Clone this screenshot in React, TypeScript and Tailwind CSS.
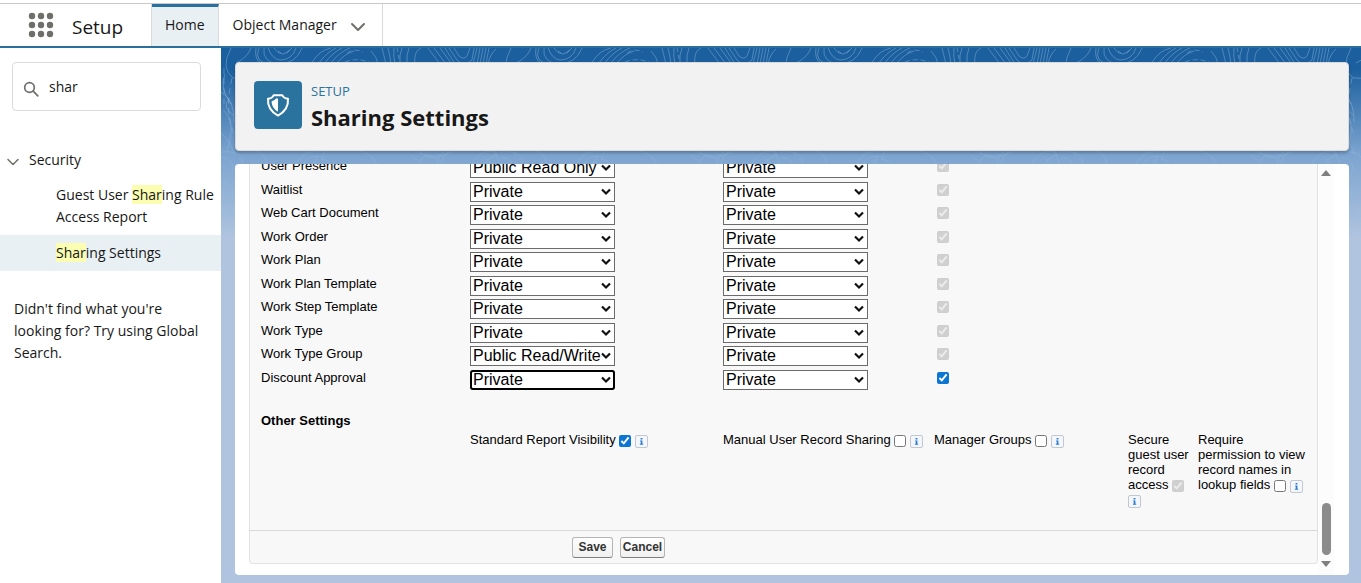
import React from "react";

const rows = [
  { name: "User Presence", internal: "Public Read Only" },
  { name: "Waitlist", internal: "Private" },
  { name: "Web Cart Document", internal: "Private" },
  { name: "Work Order", internal: "Private" },
  { name: "Work Plan", internal: "Private" },
  { name: "Work Plan Template", internal: "Private" },
  { name: "Work Step Template", internal: "Private" },
  { name: "Work Type", internal: "Private" },
  { name: "Work Type Group", internal: "Public Read/Write" },
  { name: "Discount Approval", internal: "Private", custom: true },
];

const accessLevels = ["Private", "Public Read Only", "Public Read/Write"];

function AccessSelect({ label, value, focused = false }: { label: string; value: string; focused?: boolean }) {
  return (
    <div className="relative w-[145px]">
      <select
        aria-label={label}
        defaultValue={value}
        className={
          "block h-5 w-full appearance-none border border-[#6b6b6b] bg-white pl-[2px] text-base leading-none text-black " +
          (focused ? "rounded-[3px] outline-2 -outline-offset-2 outline-black" : "")
        }
      >
        {accessLevels.map((level) => (
          <option key={level}>{level}</option>
        ))}
      </select>
      <svg
        aria-hidden="true"
        viewBox="0 0 10 8"
        className="pointer-events-none absolute top-[6px] right-1 h-2 w-[10px]"
        fill="none"
        stroke="#111"
        strokeWidth="2.2"
      >
        <path d="M1 1.500l4 4 4-4" />
      </svg>
    </div>
  );
}

function InfoButton({ label }: { label: string }) {
  return (
    <button
      type="button"
      aria-label={label}
      className="mt-[2px] inline-flex h-[13px] w-[13px] items-center justify-center rounded-[2px] border border-[#c3c8d0] bg-[#f3f6fb] align-middle"
    >
      <svg viewBox="0 0 9 9" className="h-[9px] w-[9px]" fill="#2a7bd0">
        <rect x="3.6" y="1" width="1.8" height="1.5" />
        <path d="M3 3.4h2.4v3.4h.8v1H2.9v-1h.8V4.3H3z" />
      </svg>
    </button>
  );
}

function Setting({
  id,
  text,
  checked = false,
  disabled = false,
}: {
  id: string;
  text: string;
  checked?: boolean;
  disabled?: boolean;
}) {
  return (
    <>
      <label htmlFor={id}>{text}</label>{" "}
      <input
        id={id}
        type="checkbox"
        defaultChecked={checked}
        disabled={disabled}
        className="h-3 w-3 align-middle accent-[#0b75d2]"
      />{" "}
      <InfoButton label={"About " + text} />
    </>
  );
}

function Topography() {
  return (
    <svg aria-hidden="true" className="absolute inset-x-0 top-0 h-[190px] w-full">
      <defs>
        <linearGradient id="fade" x1="0" y1="0" x2="0" y2="1">
          <stop offset="0" stopColor="#fff" />
          <stop offset="0.7" stopColor="#fff" />
          <stop offset="1" stopColor="#000" />
        </linearGradient>
        <mask id="fadeMask">
          <rect width="100%" height="100%" fill="url(#fade)" />
        </mask>
        <pattern id="contours" width="280" height="190" patternUnits="userSpaceOnUse">
          <g fill="none" stroke="#8fb8de" strokeOpacity="0.45">
            <path d="M43 0q-2 14 14 16q18 0 24-16M47 0q4 11 12 12q12 0 16-12M53 0q8 12 18 0M35 0q-2 12 6 16M30 0q-4 10-15 15M38 0q-6 14 12 17" />
            <path d="M57 3l3 2M65 5l4-3" />
            <path d="M90 16q8-14 20-16M97 16q9-12 18-16M103 16q9-12 18-16M109 16q9-12 20-16M115 16q8-10 18-13" />
            <path d="M126 5q8-5 16-1M124 14q12-5 26 1" strokeDasharray="5 3" />
            <path d="M150 3q6 6 7 13M161 0q2 8 4 16M167 0q2 8 3 16M173 0q-1 8 1 16M181 0q-3 7-2 16M188 0q-3 7-2 16" />
            <path d="M176 0l3 16" strokeDasharray="4 3" />
            <path d="M194 16q-2-12 6-16M207 0l12 16M213 0l12 16M219 0l11 15M224 0l10 16M228 0l8 12q7 7 15 0l2-12M233 0l5 8q5 4 8 0l3-8" />
            <path d="M256 0l-4 16M259 0l-3 16M262 0l-3 16M265 0l-3 16M268 0l-3 16M275 1q-6 5-8 15" />
            <path d="M10 0q-11 20 2 30q14 2 30-8M4 26q-6 14 6 30M0 44q14 8 13 30M2 62q14 12 4 40M0 85q9 8 14 22M8 50q-7 10 4 17" />
            <path d="M3 20v40M11 30q-8 36 3 58" strokeDasharray="6 4" />
            <path d="M0 104q24-2 21 13M0 110q12-2 12 13M4 138q6-15 13-18M32 102q12 2 14 14M74 118q8-18 30-15l-4 8q9 1 9 7M82 118q3-11 16-10q-5 4-2 10M90 118l4-6" />
            <path d="M134 102q16 2 22 14M190 107l10 8M196 103q14 10 36 1M199 112l6-4 12 3M224 103q-7 4-8 14M229 103q-8 4-9 14M250 118q6-16 24-15M264 118q2-9 12-11" />
            <path d="M0 132q14 4 11 26M2 150q8 16 14-12M3 128q4 30 11 42M0 168q16-4 22 8" />
            <path d="M265 34q10 0 15-8M265 54q14-20 15 4q-4 10-15 4M264 68q12 14 16 4M265 94q12 8 15 30M264 110q12 9 16 36M263 124q12 10 16 30M262 142q12 8 17 26" />
          </g>
        </pattern>
      </defs>
      <rect width="100%" height="100%" fill="url(#contours)" mask="url(#fadeMask)" />
    </svg>
  );
}

export default function App() {
  return (
    <div className="flex h-screen flex-col bg-white font-['Open_Sans','Noto_Sans',sans-serif] text-sm text-[#181818]">
      <header className="mt-[3px] flex h-[45px] shrink-0 border-t border-b-2 border-t-[#c9c9c9] border-b-[#2a6f9e]">
        <div className="flex w-[151px] items-center">
          <button type="button" aria-label="App Launcher" className="ml-7">
            <svg viewBox="0 0 26 26" className="h-[26px] w-[26px]" fill="#706e6b">
              {[4, 13, 22].map((y) => [4, 13, 22].map((x) => <circle key={x + "-" + y} cx={x} cy={y} r="3.2" />))}
            </svg>
          </button>
          <span className="ml-[18px] pt-[6px] text-[19px]">Setup</span>
        </div>
        <nav className="flex border-l border-[#dddbda]">
          <a href="#home" className="flex items-center border-t-3 border-r border-t-[#2a6f9e] border-r-[#dddbda] bg-[#e8f0f4] px-[13px] pb-[3px]">
            Home
          </a>
          <div className="flex items-center border-r border-[#dddbda] pr-4 pl-[14px]">
            <a href="#objects">Object Manager</a>
            <button type="button" aria-label="Object Manager menu" className="ml-[13px]">
              <svg viewBox="0 0 16 16" className="mt-1 h-4 w-4" fill="none" stroke="#706e6b" strokeWidth="2" strokeLinecap="round" strokeLinejoin="round">
                <path d="M2 5l6 6 6-6" />
              </svg>
            </button>
          </div>
        </nav>
      </header>

      <div className="flex min-h-0 grow">
        <aside className="w-[221px] shrink-0 pt-[14px]">
          <div className="mx-3 mr-5 flex h-[49px] items-center rounded border border-[#dddbda] pl-[10px]">
            <svg viewBox="0 0 16 16" className="mt-1 h-4 w-4 shrink-0" fill="none" stroke="#706e6b" strokeWidth="1.7" strokeLinecap="round">
              <circle cx="6.5" cy="6.5" r="4.8" />
              <path d="M10.2 10.2l4.6 4.6" />
            </svg>
            <input aria-label="Quick Find" defaultValue="shar" className="ml-[10px] w-0 grow outline-none" />
          </div>
          <button type="button" className="mt-[38px] flex h-[22px] items-center pl-[6px]">
            <svg viewBox="0 0 14 14" className="mt-[3px] h-[14px] w-[14px]" fill="none" stroke="#706e6b" strokeWidth="1.5" strokeLinecap="round" strokeLinejoin="round">
              <path d="M2 4.5l5 5 5-5" />
            </svg>
            <span className="ml-[9px]">Security</span>
          </button>
          <nav className="mt-[6px]">
            <a href="#guest" className="block py-[7px] pl-14 leading-[22px]">
              Guest User <mark className="bg-[#fbfdb0] text-inherit">Shar</mark>ing Rule
              <br />
              Access Report
            </a>
            <a href="#sharing" className="block bg-[#e8f0f4] py-[7px] pl-14 leading-[22px]">
              <mark className="bg-[#fbfdb0] text-inherit">Shar</mark>ing Settings
            </a>
          </nav>
          <p className="mt-[27px] pr-4 pl-[14px] leading-[22px]">
            Didn't find what you're looking for? Try using Global Search.
          </p>
        </aside>

        <main className="relative flex min-w-0 grow flex-col bg-[#b0c4df] bg-[linear-gradient(to_bottom,#1b5f9e_0px,#1b5f9e_20px,#7ba3cf_105px,#b0c4df_190px)] pt-[14px] pr-3 pb-2 pl-[14px]">
          <Topography />
          <section className="relative flex h-[89px] shrink-0 items-center rounded border border-[#dddbda] bg-[#f3f2f2] pl-[18px] shadow-[0_2px_3px_rgba(0,0,0,0.25)]">
            <span className="mb-1 flex h-12 w-12 items-center justify-center rounded bg-[#2a739e]">
              <svg viewBox="0 0 24 24" className="h-6 w-6" fill="none" stroke="#fff" strokeWidth="2" strokeLinejoin="round">
                <path d="M7.6 2.2h8.8q1 3 5.6 3.6q.8 11-10 16.8Q1.200 16.800 2 5.800 6.600 5.200 7.600 2.200z" />
                <path d="M12 5.500v13.300Q5.300 14.500 5.600 8.200 8.700 7.700 10 5.500z" fill="#fff" stroke="none" />
              </svg>
            </span>
            <div className="ml-[9px]">
              <div className="text-[13px] leading-5 text-[#2a739e]">SETUP</div>
              <h1 className="text-[22px] leading-8 font-bold">Sharing Settings</h1>
            </div>
          </section>

          <section className="relative mt-[13px] flex min-h-0 grow rounded bg-white pr-[15px] pl-[14px] font-['Liberation_Sans',Arial,sans-serif] text-[13px] leading-[15px] text-black">
            <form className="flex min-w-0 grow flex-col justify-end overflow-hidden pb-[11px]">
              <div className="border-x border-[#e2e2e2] bg-[#f8f8f8] pl-[11px]">
                <table className="w-full table-fixed border-collapse">
                  <colgroup>
                    <col className="w-[209px]" />
                    <col className="w-[253px]" />
                    <col className="w-[211px]" />
                    <col className="w-[194px]" />
                    <col className="w-[70px]" />
                    <col />
                  </colgroup>
                  <tbody>
                    {rows.map((row) => (
                      <tr key={row.name} className="h-6 align-top even:h-[23px]">
                        <th scope="row" className="text-left font-normal">{row.name}</th>
                        <td>
                          <AccessSelect label={row.name + " internal access"} value={row.internal} focused={row.custom} />
                        </td>
                        <td>
                          <AccessSelect label={row.name + " external access"} value="Private" />
                        </td>
                        <td className="pt-[2px] pl-[3px]">
                          <input
                            type="checkbox"
                            aria-label={row.name + " grant access using hierarchies"}
                            defaultChecked
                            disabled={!row.custom}
                            className="block h-3 w-3 accent-[#0b75d2]"
                          />
                        </td>
                        <td colSpan={2} />
                      </tr>
                    ))}
                    <tr className="h-[39px] align-bottom">
                      <th scope="colgroup" colSpan={6} className="pb-1 text-left font-bold">Other Settings</th>
                    </tr>
                    <tr className="h-[98px] align-top">
                      <td />
                      <td><Setting id="report" text="Standard Report Visibility" checked /></td>
                      <td className="whitespace-nowrap"><Setting id="manual" text="Manual User Record Sharing" /></td>
                      <td><Setting id="groups" text="Manager Groups" /></td>
                      <td className="pr-2"><Setting id="guest" text="Secure guest user record access" checked disabled /></td>
                      <td className="pr-3"><Setting id="lookup" text="Require permission to view record names in lookup fields" /></td>
                    </tr>
                  </tbody>
                </table>
              </div>
              <div className="flex h-[34px] shrink-0 items-center gap-[7px] rounded-b border border-[#e2e2e2] border-t-[#d9d9d9] bg-[#f8f8f8] pl-[322px]">
                <button type="button" className="h-[21px] w-[41px] rounded-[3px] border border-[#b5b5b5] border-b-[#7f7f7f] bg-linear-to-b from-white to-[#f0f0f0] text-xs font-bold text-[#333]">
                  Save
                </button>
                <button type="button" className="h-[21px] w-[45px] rounded-[3px] border border-[#b5b5b5] border-b-[#7f7f7f] bg-linear-to-b from-white to-[#f0f0f0] text-xs font-bold text-[#333]">
                  Cancel
                </button>
              </div>
            </form>
            <div aria-hidden="true" className="flex w-4 shrink-0 flex-col items-center bg-[#fcfcfc] pt-[6px] pb-2">
              <svg viewBox="0 0 10 6" className="h-[6px] w-[10px]" fill="#7f7f7f"><path d="M5 0l5 6H0z" /></svg>
              <div className="mt-auto mb-[6px] h-[52px] w-[9px] rounded-full bg-[#8b8b8b]" />
              <svg viewBox="0 0 10 6" className="h-[6px] w-[10px]" fill="#7f7f7f"><path d="M0 0h10L5 6z" /></svg>
            </div>
          </section>
        </main>
      </div>
    </div>
  );
}
